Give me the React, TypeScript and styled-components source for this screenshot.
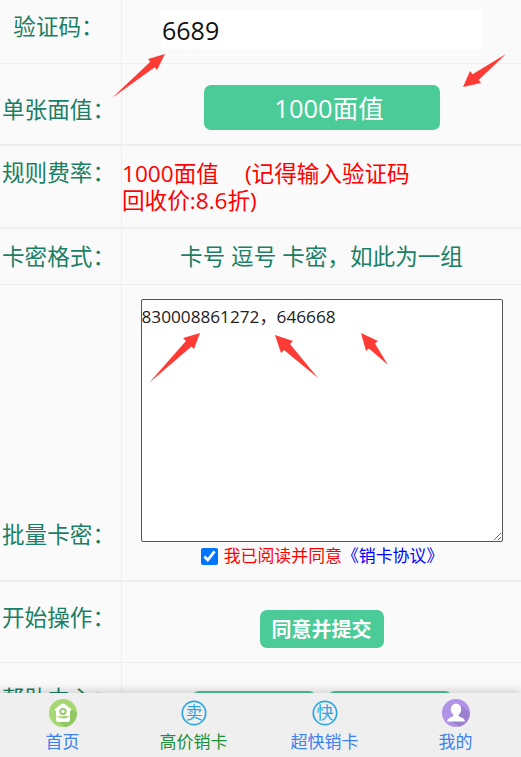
import React from 'react';
import styled, { createGlobalStyle } from 'styled-components';

const FONT = `"Open Sans", "Noto Sans CJK SC", sans-serif`;

const GlobalStyle = createGlobalStyle`
  html, body {
    margin: 0;
    padding: 0;
    height: 757px;
    overflow: hidden;
    background: #fafafa;
    font-family: ${FONT};
  }
`;

const Page = styled.div`
  position: relative;
  width: 521px;
  height: 757px;
  overflow: hidden;
  background: #fafafa;
`;

const Row = styled.div<{ $height: number; $line?: number }>`
  display: flex;
  height: ${(p) => p.$height}px;
  border-bottom: ${(p) => p.$line || 1}px solid #eeeeee;
`;

const Label = styled.div<{ $pad: number; $bottom?: boolean }>`
  flex: 0 0 122px;
  display: flex;
  justify-content: center;
  align-items: ${(p) => (p.$bottom ? 'flex-end' : 'flex-start')};
  padding: ${(p) => (p.$bottom ? `0 4px ${p.$pad}px 0` : `${p.$pad}px 4px 0 0`)};
  box-sizing: border-box;
  border-right: 1px solid #eeeeee;
  color: #1a7f64;
  font-size: 22.6px;
  line-height: 30px;
  white-space: nowrap;
`;

const Cell = styled.div<{ $pad: number }>`
  flex: 1;
  min-width: 0;
  display: flex;
  flex-direction: column;
  align-items: center;
  padding-top: ${(p) => p.$pad}px;
`;

const CodeInput = styled.input`
  width: 321px;
  height: 39px;
  box-sizing: border-box;
  border: 0;
  outline: 0;
  padding: 0 1px;
  background: #ffffff;
  color: #111111;
  font-family: ${FONT};
  font-size: 25px;
`;

const FaceButton = styled.div`
  width: 236px;
  height: 45px;
  box-sizing: border-box;
  padding-left: 15px;
  border-radius: 7px;
  background: #4bcb98;
  color: #ffffff;
  font-size: 25.5px;
  line-height: 47px;
  text-align: center;
`;

const RuleText = styled.div`
  align-self: flex-start;
  color: #ff0000;
  font-size: 22.6px;
  line-height: 27px;
  white-space: pre;
`;

const RuleGap = styled.span`
  display: inline-block;
  width: 26px;
`;

const FormatText = styled.div`
  color: #1a7f64;
  font-size: 22.6px;
  line-height: 30px;
  white-space: pre;
`;

const CardArea = styled.textarea`
  display: block;
  width: 362px;
  height: 243px;
  box-sizing: border-box;
  margin: 0;
  padding: 2px 0;
  border: 1px solid #555555;
  border-radius: 2px;
  outline: 0;
  background: #ffffff;
  color: #222222;
  font-family: ${FONT};
  font-size: 17.2px;
  line-height: 30px;
`;

const Agree = styled.label`
  display: flex;
  align-items: center;
  margin: 2px 0 0 1px;
  font-size: 16.9px;
  line-height: 24px;
  color: #ff0000;
  white-space: nowrap;
`;

const AgreeBox = styled.input`
  width: 17px;
  height: 17px;
  margin: 0 6px 0 0;
  accent-color: #0075ff;
`;

const AgreeLink = styled.span`
  color: #0000ff;
`;

const SubmitButton = styled.div`
  width: 124px;
  height: 38px;
  border-radius: 7px;
  background: #4bcb98;
  color: #ffffff;
  font-size: 20px;
  font-weight: 700;
  line-height: 39px;
  text-align: center;
  white-space: nowrap;
`;

const HelpButtons = styled.div`
  display: flex;
  gap: 12px;
`;

const Arrows = styled.svg`
  position: absolute;
  left: 0;
  top: 0;
  pointer-events: none;
`;

const Footer = styled.nav`
  position: absolute;
  left: -3px;
  right: 0;
  bottom: 0;
  height: 64px;
  display: flex;
  background: #efefef;
  box-shadow: 0 -3px 8px rgba(0, 0, 0, 0.16);
`;

const Tab = styled.div<{ $active?: boolean }>`
  flex: 0 0 131px;
  display: flex;
  flex-direction: column;
  align-items: center;
  padding-top: 6px;
  color: ${(p) => (p.$active ? '#1f8f3c' : '#3b82f0')};
  font-size: 17px;
  line-height: 24px;
`;

const TabIcon = styled.svg`
  display: block;
  width: 28px;
  height: 28px;
  margin-bottom: 3px;
`;

type Pt = [number, number];

// tail, tip and the two barbs of a hand-drawn annotation arrow
const arrowPoints = (tail: Pt, tip: Pt, a: Pt, b: Pt) => {
  const axis = (p: Pt): Pt => {
    const dx = tip[0] - tail[0];
    const dy = tip[1] - tail[1];
    const t = ((p[0] - tail[0]) * dx + (p[1] - tail[1]) * dy) / (dx * dx + dy * dy);
    return [tail[0] + dx * t, tail[1] + dy * t];
  };
  const notch = (p: Pt): Pt => {
    const c = axis(p);
    return [p[0] + (c[0] - p[0]) * 0.5, p[1] + (c[1] - p[1]) * 0.5];
  };
  return [tail, notch(a), a, tip, b, notch(b)].map((p) => p.join(',')).join(' ');
};

const ARROWS: [Pt, Pt, Pt, Pt][] = [
  [[112, 98], [165, 54], [148, 59], [157, 70]],
  [[506, 54], [463, 87], [470, 71], [481, 83]],
  [[149, 383], [200, 333], [183, 338], [194, 349]],
  [[318, 378], [275, 335], [293, 341], [281, 353]],
  [[388, 365], [361, 333], [378, 341], [366, 351]],
];

const HomeIcon = () => (
  <TabIcon viewBox="0 0 28 28">
    <circle cx="14" cy="14" r="14" fill="#a5d873" />
    <path d="M23 11l5 3a14 14 0 0 1-12 13.900L9 22z" fill="#93c765" />
    <path d="M14 4.500c1 0 2 .6 3 1.400l5 4.200c.7.600.3 1.700-.6 1.700H21v5.500H7v-5.500h-.4c-.9 0-1.300-1.100-.6-1.700l5-4.200c1-.8 2-1.400 3-1.400z" fill="#ffffff" />
    <circle cx="14" cy="12.500" r="3.600" fill="#93c765" />
    <circle cx="14" cy="12.500" r="1.700" fill="#ffffff" />
    <path d="M7 17.500h1.500c1 1.300 3 1.800 5.500 1.800s4.500-.5 5.500-1.800H21v3c0 1.400-1 2.500-2.500 2.500h-9C8 23 7 21.900 7 20.500z" fill="#ffffff" />
  </TabIcon>
);

const StampIcon = ({ char }: { char: string }) => (
  <TabIcon viewBox="0 0 28 28">
    <circle cx="14" cy="14" r="11.700" fill="none" stroke="#2ea7e0" strokeWidth="1.700" />
    <text x="14" y="20" textAnchor="middle" fontSize="17" fill="#2ea7e0" fontFamily={FONT}>
      {char}
    </text>
  </TabIcon>
);

const MineIcon = () => (
  <TabIcon viewBox="0 0 28 28">
    <circle cx="14" cy="14" r="14" fill="#b092e6" />
    <path d="M20 7l8 7a14 14 0 0 1-10 13.400L8 22z" fill="#9b80cf" />
    <ellipse cx="14" cy="10.500" rx="5.200" ry="6" fill="#ffffff" />
    <path d="M5 22.500c.4-2.300 1.400-3.300 3.500-4 2-.7 2.800-1.300 3-2.500h5c.2 1.200 1 1.800 3 2.500 2.100.7 3.100 1.700 3.500 4z" fill="#ffffff" />
  </TabIcon>
);

const App = () => {
  return (
    <Page>
      <GlobalStyle />
      <Row $height={63}>
        <Label $pad={12}>验证码：</Label>
        <Cell $pad={10}>
          <CodeInput defaultValue="6689" />
        </Cell>
      </Row>
      <Row $height={80} $line={2}>
        <Label $pad={31}>单张面值：</Label>
        <Cell $pad={21}>
          <FaceButton>1000面值</FaceButton>
        </Cell>
      </Row>
      <Row $height={81} $line={2}>
        <Label $pad={12}>规则费率：</Label>
        <Cell $pad={14}>
          <RuleText>
            1000面值<RuleGap />(记得输入验证码{'\n'}回收价:8.6折)
          </RuleText>
        </Cell>
      </Row>
      <Row $height={55}>
        <Label $pad={13}>卡密格式：</Label>
        <Cell $pad={13}>
          <FormatText>卡号 逗号 卡密，如此为一组</FormatText>
        </Cell>
      </Row>
      <Row $height={295} $line={2}>
        <Label $pad={30} $bottom>批量卡密：</Label>
        <Cell $pad={14}>
          <CardArea defaultValue="830008861272，646668" />
          <Agree>
            <AgreeBox type="checkbox" defaultChecked />
            我已阅读并同意<AgreeLink>《销卡协议》</AgreeLink>
          </Agree>
        </Cell>
      </Row>
      <Row $height={80}>
        <Label $pad={21}>开始操作：</Label>
        <Cell $pad={28}>
          <SubmitButton>同意并提交</SubmitButton>
        </Cell>
      </Row>
      <Row $height={120}>
        <Label $pad={21}>帮助中心：</Label>
        <Cell $pad={28}>
          <HelpButtons>
            <SubmitButton>卡密查询</SubmitButton>
            <SubmitButton>联系客服</SubmitButton>
          </HelpButtons>
        </Cell>
      </Row>

      <Arrows width="521" height="757" viewBox="0 0 521 757">
        {ARROWS.map((a, i) => (
          <polygon key={i} points={arrowPoints(a[0], a[1], a[2], a[3])} fill="#ff3b36" />
        ))}
      </Arrows>

      <Footer>
        <Tab>
          <HomeIcon />
          首页
        </Tab>
        <Tab $active>
          <StampIcon char="卖" />
          高价销卡
        </Tab>
        <Tab>
          <StampIcon char="快" />
          超快销卡
        </Tab>
        <Tab>
          <MineIcon />
          我的
        </Tab>
      </Footer>
    </Page>
  );
};

export default App;
